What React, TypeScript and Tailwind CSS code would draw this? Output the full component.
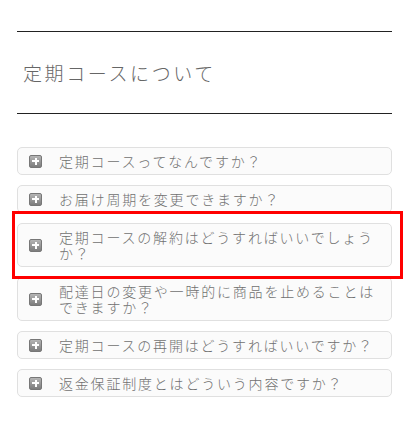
import React from 'react';

const questions = [
  '定期コースってなんですか？',
  'お届け周期を変更できますか？',
  '定期コースの解約はどうすればいいでしょうか？',
  '配達日の変更や一時的に商品を止めることはできますか？',
  '定期コースの再開はどうすればいいですか？',
  '返金保証制度とはどういう内容ですか？',
];

const PlusIcon = () => (
  <span className="shrink-0 w-[13px] h-[13px] rounded-[2px] bg-gradient-to-b from-[#b5b5b5] to-[#7d7d7d] border border-[#777] relative flex items-center justify-center">
    <span className="absolute w-[7px] h-[2px] bg-white" />
    <span className="absolute w-[2px] h-[7px] bg-white" />
  </span>
);

export default function App() {
  return (
    <div
      className="relative w-[409px] h-[425px] bg-white px-[17px] pt-[31px]"
      style={{ fontFamily: '"Noto Sans CJK JP", "Noto Sans", sans-serif' }}
    >
      <div className="border-y border-[#222] h-[83px] flex items-center pl-[6px]">
        <h2 className="text-[19px] tracking-[2.6px] text-[#666] font-light leading-none">定期コースについて</h2>
      </div>

      <ul className="mt-[33px] flex flex-col gap-[10px]">
        {questions.map((q) => (
          <li
            key={q}
            className="flex items-center border border-[#e0e0e0] rounded-[5px] bg-[#fbfbfb] pl-[11px] pr-[8px] py-[5px]"
          >
            <PlusIcon />
            <span className="ml-[17px] text-[14px] leading-[16px] tracking-[1.8px] text-[#707070] font-light">{q}</span>
          </li>
        ))}
      </ul>

      {/* highlight annotation */}
      <div className="absolute left-[12px] top-[211px] w-[391px] h-[68px] border-[3px] border-[#ff0000] pointer-events-none" />
    </div>
  );
}
